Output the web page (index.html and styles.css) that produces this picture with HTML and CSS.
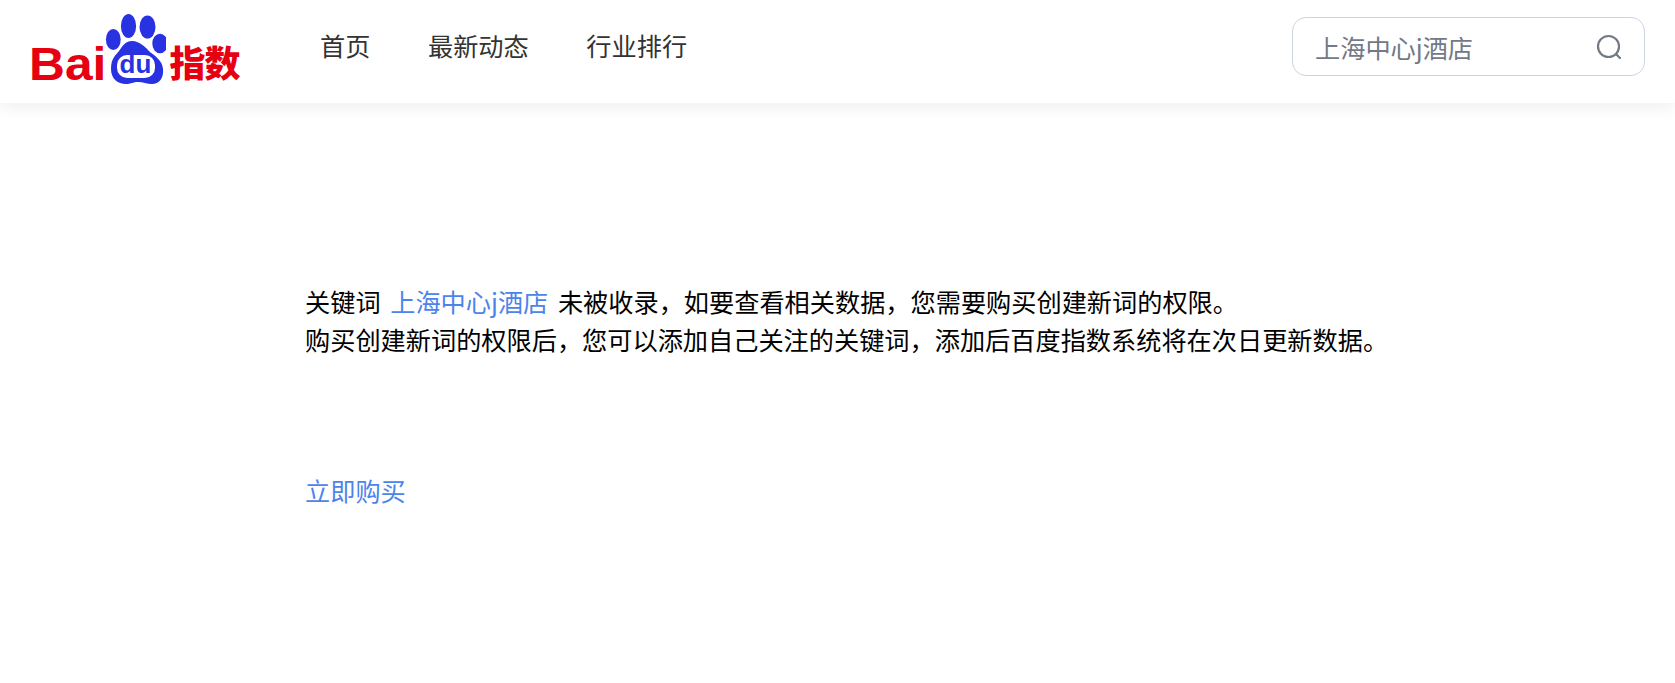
FILE: index.html
```html
<!DOCTYPE html>
<html lang="zh-CN">
<head>
  <meta charset="UTF-8">
  <meta name="viewport" content="width=device-width, initial-scale=1.0">
  <title>百度指数</title>
  <link rel="stylesheet" href="styles.css">
</head>
<body>
<div class="navbar">
  <a class="logo" href="#">
    <span class="logo-bai">Bai</span>
    <span class="logo-paw">
      <svg viewBox="0 0 66 70" width="66" height="70">
        <ellipse cx="13.3" cy="25.5" rx="7.4" ry="10.5" fill="#2932e1"/>
        <ellipse cx="28.5" cy="12" rx="7.6" ry="12" fill="#2932e1"/>
        <ellipse cx="47.5" cy="13" rx="8" ry="11.5" fill="#2932e1"/>
        <ellipse cx="60" cy="29.5" rx="7.7" ry="9.8" fill="#2932e1"/>
        <path d="M32 27C25 27 22 33 19 37C16 41 11 44 11 55C11 65 18 70 26 70C31 70 33 68 38 68C43 68 47 70 52 70C59 70 64 64 63 55C62 46 55 42 50 38C46 34 40 27 32 27Z" fill="#2932e1"/>
        <rect x="17" y="41" width="38" height="23" rx="10" fill="white"/>
      </svg>
      <span class="logo-du">du</span>
    </span>
    <span class="logo-name">指数</span>
  </a>
  <div class="nav-links">
    <a href="#">首页</a>
    <a href="#">最新动态</a>
    <a href="#">行业排行</a>
  </div>
  <div class="search-box">
    <span class="search-text">上海中心j酒店</span>
    <svg class="search-icon" viewBox="0 0 26 26" width="26" height="26">
      <circle cx="12.5" cy="12.5" r="10.5" fill="none" stroke="#737987" stroke-width="2.2"/>
      <path d="M20.5 20.5l3.5 3.5" fill="none" stroke="#737987" stroke-width="2.2" stroke-linecap="round"/>
    </svg>
  </div>
</div>
<div class="container">
  <p class="notice">关键词 <a class="keyword" href="#">上海中心j酒店</a> 未被收录，如要查看相关数据，您需要购买创建新词的权限。<br>购买创建新词的权限后，您可以添加自己关注的关键词，添加后百度指数系统将在次日更新数据。</p>
  <a class="buy-link" href="#">立即购买</a>
</div>
</body>
</html>
```

FILE: styles.css
```css
* { box-sizing: border-box; }
body {
  margin: 0;
  font-family: 'Noto Sans CJK SC', 'Liberation Sans', sans-serif;
  background: white;
  color: black;
  overflow: hidden;
}
a {
  text-decoration: none;
  color: #4c84ec;
}
.navbar {
  display: flex;
  align-items: center;
  height: 103px;
  padding: 0 30px 0 32px;
  background: white;
  box-shadow: 0 4px 16px rgba(0,0,0,0.07);
}
.logo {
  display: flex;
  align-items: flex-end;
  width: 288px;
  height: 70px;
  margin-top: -5px;
}
.logo-bai {
  margin-left: -3px;
  font-family: 'Liberation Sans', sans-serif;
  font-weight: bold;
  font-size: 46px;
  line-height: 40px;
  color: #e60012;
  transform: scaleX(1.08);
  transform-origin: left;
}
.logo-paw {
  position: relative;
  width: 66px;
  height: 70px;
  margin-left: -1px;
}
.logo-du {
  position: absolute;
  left: 20px;
  bottom: 5px;
  font-family: 'Liberation Sans', sans-serif;
  font-weight: bold;
  font-size: 26px;
  line-height: 30px;
  color: #2932e1;
}
.logo-name {
  margin: 0 0 3px 4px;
  font-weight: 900;
  font-size: 36px;
  line-height: 40px;
  letter-spacing: -1px;
  color: #e60012;
}
.nav-links {
  display: flex;
  gap: 57.6px;
  flex: 1;
  margin-top: -14px;
}
.nav-links a {
  font-size: 25.2px;
  color: #333;
}
.search-box {
  display: flex;
  align-items: center;
  justify-content: space-between;
  width: 353px;
  height: 59px;
  margin-top: -10px;
  padding: 0 22px;
  border: 1px solid #ced3e2;
  border-radius: 14px;
}
.search-text {
  font-size: 25.2px;
  color: #737987;
}
.container {
  padding: 179px 0 0 305px;
}
.notice {
  margin: 0;
  font-size: 25.2px;
  line-height: 38px;
}
.keyword {
  margin: 0 4px;
}
.buy-link {
  display: block;
  margin-top: 113px;
  font-size: 25.2px;
  line-height: 38px;
}
```
